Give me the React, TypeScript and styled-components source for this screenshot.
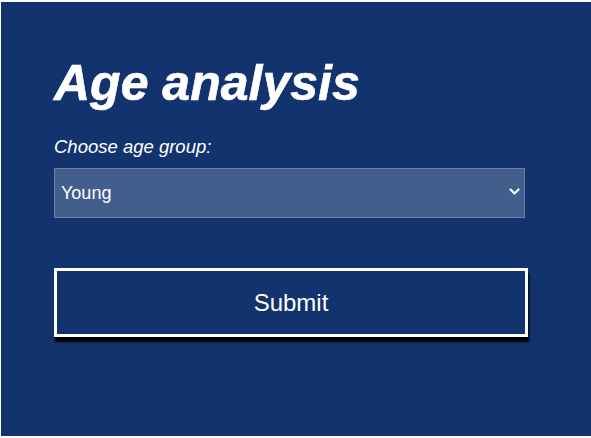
import React from "react";
import styled, { createGlobalStyle } from "styled-components";

const Global = createGlobalStyle`
  html, body { margin: 0; padding: 0; background: #ffffff; }
  body { font-family: "Liberation Sans", Arial, sans-serif; }
`;

const Page = styled.div`
  margin: 2px 0 0 1px;
  height: 434px;
  background: #13336e;
  display: flex;
  flex-direction: column;
  padding: 56px 0 0 53px;
  box-sizing: border-box;
`;

const Title = styled.h1`
  margin: 0;
  font-size: 50px;
  line-height: 50px;
  font-weight: 700;
  font-style: italic;
  color: #ffffff;
  -webkit-text-stroke: 0.6px #ffffff;
`;

const Label = styled.label`
  margin-top: 28px;
  font-size: 18.5px;
  line-height: 21px;
  font-style: italic;
  color: #ffffff;
`;

const SelectWrap = styled.div`
  position: relative;
  margin-top: 11px;
  width: 471px;
  height: 50px;
`;

const Select = styled.select`
  appearance: none;
  -webkit-appearance: none;
  width: 100%;
  height: 100%;
  box-sizing: border-box;
  background: #415e8c;
  border: 1px solid #6c7fa0;
  border-radius: 0;
  color: #ffffff;
  font-family: "Liberation Sans", Arial, sans-serif;
  font-size: 18px;
  padding: 0 0 0 6px;
  outline: none;
`;

const Chevron = styled.svg`
  position: absolute;
  right: 5px;
  top: 20px;
  width: 11px;
  height: 8px;
  pointer-events: none;
`;

const SubmitButton = styled.button`
  margin-top: 50px;
  width: 474px;
  height: 69px;
  box-sizing: border-box;
  background: #13336e;
  border: 3px solid #ffffff;
  color: #ffffff;
  font-family: "Liberation Sans", Arial, sans-serif;
  font-size: 24px;
  box-shadow: 1px 5px 2px #000000;
  cursor: pointer;
`;

export default function App() {
  return (
    <>
      <Global />
      <Page>
        <Title>Age analysis</Title>
        <Label htmlFor="age">Choose age group:</Label>
        <SelectWrap>
          <Select id="age" defaultValue="young">
            <option value="young">Young</option>
            <option value="middle">Middle-aged</option>
            <option value="old">Old</option>
          </Select>
          <Chevron viewBox="0 0 11 8">
            <path d="M1.5 1.5 L5.5 5.5 L9.5 1.5" fill="none" stroke="#ffffff" strokeWidth="2.2" strokeLinecap="round" strokeLinejoin="round" />
          </Chevron>
        </SelectWrap>
        <SubmitButton type="button">Submit</SubmitButton>
      </Page>
    </>
  );
}
